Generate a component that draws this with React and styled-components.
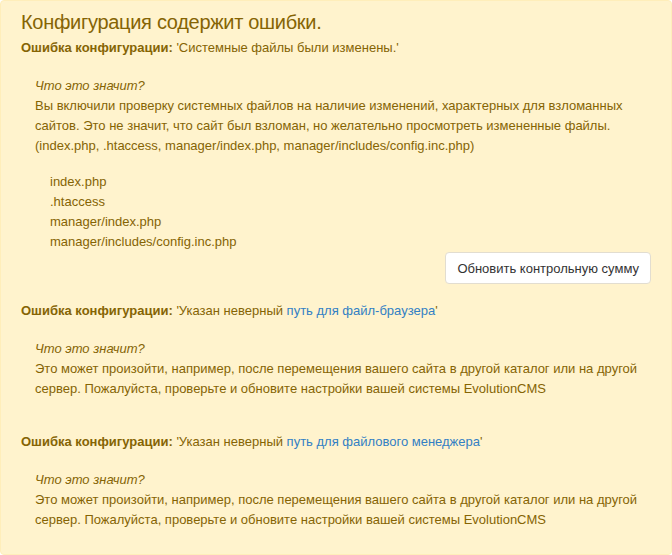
import React from 'react';
import styled, { createGlobalStyle } from 'styled-components';

const GlobalStyle = createGlobalStyle`
  body {
    margin: 0;
    background: #ffffff;
    font-family: "Liberation Sans", Arial, sans-serif;
  }
`;

const sections = [
  {
    message: 'Системные файлы были изменены.',
    text:
      'Вы включили проверку системных файлов на наличие изменений, характерных для взломанных сайтов. Это не значит, что сайт был взломан, но желательно просмотреть измененные файлы. (index.php, .htaccess, manager/index.php, manager/includes/config.inc.php)',
    files: ['index.php', '.htaccess', 'manager/index.php', 'manager/includes/config.inc.php'],
  },
  {
    message: 'Указан неверный ',
    link: 'путь для файл-браузера',
    text:
      'Это может произойти, например, после перемещения вашего сайта в другой каталог или на другой сервер. Пожалуйста, проверьте и обновите настройки вашей системы EvolutionCMS',
  },
  {
    message: 'Указан неверный ',
    link: 'путь для файлового менеджера',
    text:
      'Это может произойти, например, после перемещения вашего сайта в другой каталог или на другой сервер. Пожалуйста, проверьте и обновите настройки вашей системы EvolutionCMS',
  },
];

const App = () => {
  return (
    <>
      <GlobalStyle />
      <Alert>
        <Title>Конфигурация содержит ошибки.</Title>
        <Sections>
          {sections.map((s, i) => (
            <Section key={i}>
              <ErrorLine>
                <strong>Ошибка конфигурации:</strong> '{s.message}
                {s.link && <Link href="#">{s.link}</Link>}'
              </ErrorLine>
              <Explanation>
                <Question>Что это значит?</Question>
                <Text>{s.text}</Text>
                {s.files && (
                  <>
                    <FileList>
                      {s.files.map((f) => (
                        <li key={f}>{f}</li>
                      ))}
                    </FileList>
                    <ButtonRow>
                      <Button type="button">Обновить контрольную сумму</Button>
                    </ButtonRow>
                  </>
                )}
              </Explanation>
            </Section>
          ))}
        </Sections>
      </Alert>
    </>
  );
};

const Alert = styled.div`
  box-sizing: border-box;
  width: 672px;
  padding: 7px 20px 8px;
  background: #fff3cd;
  border: 1px solid #ffeeba;
  border-radius: 4px;
  color: #856404;
  font-size: 13px;
  line-height: 20px;
`;

const Title = styled.h2`
  margin: 0 0 2px;
  font-size: 20px;
  letter-spacing: -0.3px;
  line-height: 28px;
  font-weight: normal;
`;

const Sections = styled.div`
  display: flex;
  flex-direction: column;
  gap: 17px;
`;

const Section = styled.div`
  display: flex;
  flex-direction: column;
`;

const ErrorLine = styled.div`
  strong {
    font-weight: bold;
  }
`;

const Link = styled.a`
  color: #3380c4;
  text-decoration: none;
`;

const Explanation = styled.div`
  margin-top: 18px;
  padding-left: 14px;
`;

const Question = styled.div`
  font-style: italic;
`;

const Text = styled.p`
  margin: 0 0 16px;
`;

const FileList = styled.ul`
  margin: 0;
  padding-left: 15px;
  list-style: none;
`;

const ButtonRow = styled.div`
  display: flex;
  justify-content: flex-end;
`;

const Button = styled.button`
  height: 32px;
  padding: 0 11px;
  background: #ffffff;
  border: 1px solid #e2ddd0;
  border-radius: 4px;
  color: #333333;
  font-family: "Liberation Sans", Arial, sans-serif;
  font-size: 13px;
  cursor: pointer;
`;

export default App;
